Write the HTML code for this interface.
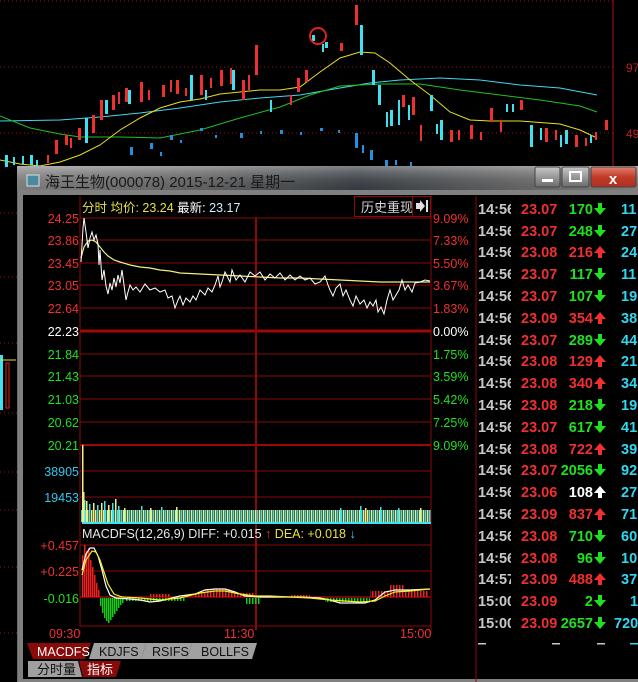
<!DOCTYPE html>
<html><head><meta charset="utf-8">
<style>
html,body{margin:0;padding:0;background:#000;width:638px;height:682px;overflow:hidden}
svg{display:block}
text{font-family:"Liberation Sans","Noto Sans CJK SC",sans-serif}
</style></head><body>
<svg width="638" height="682" viewBox="0 0 638 682" xmlns="http://www.w3.org/2000/svg">
<defs>
<linearGradient id="tb" x1="0" y1="0" x2="1" y2="0">
<stop offset="0" stop-color="#8a8a8a"/><stop offset="0.3" stop-color="#6a6a6a"/><stop offset="0.55" stop-color="#3a4148"/><stop offset="0.8" stop-color="#6c6c6c"/><stop offset="1" stop-color="#8c8c8c"/></linearGradient>
<linearGradient id="tbv" x1="0" y1="0" x2="0" y2="1"><stop offset="0" stop-color="#fff" stop-opacity="0.35"/><stop offset="1" stop-color="#000" stop-opacity="0.1"/></linearGradient>
<linearGradient id="cls" x1="0" y1="0" x2="0" y2="1"><stop offset="0" stop-color="#e08070"/><stop offset="0.5" stop-color="#c23a28"/><stop offset="1" stop-color="#b03020"/></linearGradient>
<linearGradient id="btn" x1="0" y1="0" x2="0" y2="1"><stop offset="0" stop-color="#c8c8c8"/><stop offset="1" stop-color="#6a6a6a"/></linearGradient>
<pattern id="vol" x="81" y="0" width="4" height="682" patternUnits="userSpaceOnUse"><rect x="0" y="0" width="1.5" height="682" fill="#40e0f0"/><rect x="2" y="0" width="1.5" height="682" fill="#f0f080"/></pattern>
<pattern id="mr" x="0" y="0" width="3" height="682" patternUnits="userSpaceOnUse"><rect x="0" y="0" width="1.5" height="682" fill="#f02020"/></pattern>
<pattern id="mg" x="0" y="0" width="3" height="682" patternUnits="userSpaceOnUse"><rect x="0" y="0" width="1.5" height="682" fill="#10d010"/></pattern>
<clipPath id="tc"><rect x="476" y="196" width="35" height="486"/></clipPath>
</defs>

<!-- background chart -->
<g stroke="#a01010" stroke-dasharray="1,3" stroke-width="1">
<line x1="0" y1="67" x2="614" y2="67"/><line x1="0" y1="133" x2="614" y2="133"/>
<line x1="0" y1="1" x2="614" y2="1"/>
<line x1="0" y1="213" x2="17" y2="213"/><line x1="0" y1="277" x2="17" y2="277"/><line x1="0" y1="343" x2="17" y2="343"/><line x1="0" y1="413" x2="17" y2="413"/><line x1="0" y1="472" x2="17" y2="472"/><line x1="0" y1="510" x2="17" y2="510"/><line x1="0" y1="567" x2="17" y2="567"/><line x1="0" y1="633" x2="17" y2="633"/>
</g>
<line x1="613" y1="0" x2="613" y2="166" stroke="#b01010"/>
<text x="626" y="72" fill="#c02020" font-size="12">97</text>
<text x="626" y="138" fill="#c02020" font-size="12">49</text>
<polyline fill="none" stroke="#40d8f0" stroke-width="1" points="0,121 60,120 100,117 140,113 180,108 220,102 260,98 300,95 340,88 370,83 400,80 440,78 480,80 520,85 560,88 597,95"/>
<polyline fill="none" stroke="#20c020" stroke-width="1" points="0,116 30,128 60,134 80,137 120,137 160,138 200,130 240,118 280,107 310,95 340,86 380,84 420,84 460,90 500,95 540,100 580,106 597,112"/>
<polyline fill="none" stroke="#e8e020" stroke-width="1" points="0,160 20,164 40,166 60,162 80,155 100,145 120,130 140,118 160,108 180,102 200,99 220,94 240,92 260,90 280,90 300,87 320,72 340,58 360,52 375,53 390,63 410,80 430,95 450,112 470,120 490,121 520,121 560,124 580,130 597,138"/>
<g fill="#f03030">
<rect x="55" y="140" width="3" height="14"/><rect x="65" y="135" width="3" height="10"/><rect x="78" y="128" width="3" height="12"/><rect x="92" y="115" width="3" height="18"/><rect x="100" y="100" width="3" height="20"/><rect x="112" y="95" width="3" height="15"/><rect x="125" y="88" width="3" height="14"/><rect x="140" y="82" width="3" height="20"/><rect x="162" y="85" width="3" height="12"/><rect x="176" y="80" width="3" height="14"/><rect x="200" y="75" width="3" height="20"/><rect x="220" y="70" width="3" height="16"/><rect x="242" y="80" width="3" height="20"/><rect x="255" y="45" width="3" height="30"/><rect x="297" y="78" width="3" height="14"/><rect x="305" y="70" width="3" height="12"/><rect x="340" y="43" width="3" height="8"/><rect x="355" y="5" width="3" height="20"/><rect x="402" y="95" width="3" height="12"/><rect x="412" y="97" width="3" height="18"/><rect x="450" y="130" width="3" height="12"/><rect x="470" y="125" width="3" height="14"/><rect x="490" y="108" width="3" height="14"/><rect x="520" y="100" width="3" height="10"/><rect x="545" y="128" width="3" height="14"/><rect x="575" y="135" width="3" height="12"/><rect x="605" y="120" width="3" height="10"/>
<rect x="47" y="155" width="2" height="8"/><rect x="70" y="138" width="2" height="10"/><rect x="118" y="92" width="2" height="12"/><rect x="148" y="90" width="2" height="10"/><rect x="170" y="80" width="2" height="12"/><rect x="185" y="88" width="2" height="8"/><rect x="210" y="78" width="2" height="10"/><rect x="230" y="68" width="2" height="16"/><rect x="248" y="75" width="2" height="15"/><rect x="290" y="95" width="2" height="10"/><rect x="420" y="125" width="2" height="16"/><rect x="458" y="130" width="2" height="10"/><rect x="480" y="132" width="2" height="8"/><rect x="500" y="120" width="2" height="12"/><rect x="555" y="130" width="2" height="10"/><rect x="585" y="138" width="2" height="8"/><rect x="595" y="132" width="2" height="8"/>
</g>
<g fill="#40e0f0">
<rect x="5" y="155" width="3" height="12"/><rect x="30" y="155" width="3" height="10"/><rect x="85" y="118" width="3" height="25"/><rect x="105" y="100" width="3" height="14"/><rect x="128" y="90" width="3" height="14"/><rect x="190" y="75" width="3" height="25"/><rect x="232" y="70" width="3" height="20"/><rect x="312" y="35" width="3" height="6"/><rect x="325" y="42" width="3" height="6"/><rect x="360" y="25" width="3" height="30"/><rect x="372" y="70" width="3" height="15"/><rect x="378" y="85" width="3" height="20"/><rect x="390" y="110" width="3" height="16"/><rect x="430" y="95" width="3" height="16"/><rect x="440" y="120" width="3" height="20"/><rect x="530" y="125" width="3" height="22"/><rect x="565" y="130" width="3" height="14"/>
<rect x="13" y="157" width="2" height="8"/><rect x="22" y="156" width="2" height="8"/><rect x="36" y="160" width="2" height="6"/><rect x="205" y="90" width="2" height="10"/><rect x="270" y="100" width="2" height="12"/><rect x="322" y="44" width="2" height="8"/><rect x="386" y="112" width="2" height="15"/><rect x="398" y="100" width="2" height="25"/><rect x="408" y="105" width="2" height="15"/><rect x="436" y="124" width="2" height="10"/><rect x="506" y="104" width="2" height="8"/><rect x="512" y="104" width="2" height="8"/><rect x="540" y="128" width="2" height="12"/><rect x="560" y="135" width="2" height="12"/><rect x="590" y="135" width="2" height="8"/>
</g>
<g fill="#2090e0">
<rect x="130" y="147" width="3" height="8"/><rect x="150" y="143" width="3" height="6"/><rect x="170" y="135" width="3" height="5"/><rect x="200" y="128" width="3" height="3"/><rect x="240" y="133" width="3" height="5"/><rect x="280" y="130" width="3" height="4"/><rect x="320" y="128" width="3" height="3"/><rect x="355" y="133" width="3" height="15"/><rect x="370" y="150" width="3" height="10"/><rect x="385" y="160" width="3" height="6"/>
<rect x="160" y="152" width="2" height="4"/><rect x="180" y="140" width="2" height="3"/><rect x="215" y="135" width="2" height="3"/><rect x="260" y="131" width="2" height="3"/><rect x="300" y="132" width="2" height="3"/><rect x="338" y="130" width="2" height="3"/><rect x="362" y="145" width="2" height="8"/><rect x="395" y="160" width="2" height="5"/><rect x="410" y="162" width="2" height="4"/>
</g>
<circle cx="318" cy="36" r="8" fill="none" stroke="#e02020" stroke-width="2"/>
<!-- left bits -->
<rect x="0" y="355" width="3" height="55" fill="#40e0f0"/><rect x="6" y="363" width="3" height="45" fill="none" stroke="#e02020"/>
<line x1="0" y1="360" x2="16" y2="360" stroke="#e8e020"/>

<!-- dialog frame -->
<rect x="17" y="166" width="621" height="516" fill="#6c6c6c"/>
<rect x="17" y="166" width="621" height="24" fill="url(#tb)"/>
<rect x="17" y="166" width="621" height="24" fill="url(#tbv)"/>
<rect x="18" y="190" width="620" height="492" fill="#808080"/>
<rect x="23" y="195" width="615" height="484" fill="#000"/>
<rect x="27" y="175" width="12" height="11" fill="#4a8aa0" stroke="#ddd" stroke-width="1"/>
<text x="45" y="187" fill="#1a1a1a" font-size="15">海王生物(000078) 2015-12-21 星期一</text>
<rect x="535" y="167" width="25" height="20" rx="2" fill="url(#btn)" stroke="#444"/>
<rect x="542" y="179" width="11" height="3" fill="#fff"/>
<rect x="562" y="167" width="27" height="20" rx="2" fill="url(#btn)" stroke="#444"/>
<rect x="570" y="172" width="11" height="9" fill="none" stroke="#fff" stroke-width="2"/>
<rect x="591" y="167" width="45" height="20" rx="2" fill="url(#cls)" stroke="#444"/>
<text x="613" y="184" fill="#fff" font-size="15" font-weight="bold" text-anchor="middle">x</text>

<!-- main chart grid -->
<g stroke="#8a0a0a" stroke-width="1">
<line x1="80" y1="218" x2="431" y2="218"/><line x1="80" y1="240" x2="431" y2="240"/><line x1="80" y1="263" x2="431" y2="263"/><line x1="80" y1="285" x2="431" y2="285"/><line x1="80" y1="308" x2="431" y2="308"/>
<line x1="80" y1="354" x2="431" y2="354"/><line x1="80" y1="376" x2="431" y2="376"/><line x1="80" y1="399" x2="431" y2="399"/><line x1="80" y1="422" x2="431" y2="422"/>
<line x1="80" y1="471" x2="431" y2="471"/><line x1="80" y1="497" x2="431" y2="497"/>
<line x1="80" y1="545" x2="431" y2="545"/><line x1="80" y1="571" x2="431" y2="571"/>
<line x1="80" y1="522" x2="431" y2="522"/><line x1="80" y1="626" x2="431" y2="626"/>
</g>
<line x1="80" y1="331" x2="431" y2="331" stroke="#a00808" stroke-width="3"/>
<line x1="80" y1="445" x2="431" y2="445" stroke="#a00808" stroke-width="2"/>
<line x1="80" y1="597" x2="431" y2="597" stroke="#a00808" stroke-width="1.5"/>
<line x1="80" y1="196" x2="80" y2="626" stroke="#8a0a0a"/>
<line x1="431" y1="196" x2="431" y2="626" stroke="#8a0a0a"/>
<line x1="256" y1="218" x2="256" y2="630" stroke="#8a0a0a" stroke-width="2"/>
<line x1="476" y1="196" x2="476" y2="682" stroke="#8a0a0a"/>
<line x1="80" y1="630" x2="80" y2="634" stroke="#8a0a0a"/><line x1="431" y1="626" x2="431" y2="634" stroke="#8a0a0a"/>

<!-- header -->
<text x="82" y="212" font-size="12.5"><tspan fill="#e8e040">分时 均价: 23.24</tspan><tspan fill="#fff"> 最新: </tspan><tspan fill="#d0f0ff">23.17</tspan></text>
<rect x="354.5" y="196.5" width="58" height="20" fill="#000" stroke="#8a0a0a"/>
<text x="361" y="212" fill="#d8d8d8" font-size="13">历史重现</text>
<rect x="412.5" y="196.5" width="18" height="20" fill="#000" stroke="#8a0a0a"/>
<path d="M416 203h4v-3l5 6l-5 6v-3h-4z" fill="#e0e0e0"/><rect x="426" y="200" width="2" height="12" fill="#e0e0e0"/>

<!-- left labels -->
<g font-size="12.5" text-anchor="end">
<text x="79" y="223" fill="#f03030">24.25</text><text x="79" y="245" fill="#f03030">23.86</text><text x="79" y="268" fill="#f03030">23.45</text><text x="79" y="290" fill="#f03030">23.05</text><text x="79" y="313" fill="#f03030">22.64</text>
<text x="79" y="336" fill="#fff">22.23</text>
<text x="79" y="359" fill="#20e020">21.84</text><text x="79" y="381" fill="#20e020">21.43</text><text x="79" y="404" fill="#20e020">21.03</text><text x="79" y="427" fill="#20e020">20.62</text><text x="79" y="450" fill="#20e020">20.21</text>
<text x="79" y="476" fill="#30c8f0">38905</text><text x="79" y="502" fill="#30c8f0">19453</text>
<text x="79" y="550" fill="#f03030">+0.457</text><text x="79" y="576" fill="#f03030">+0.225</text><text x="79" y="603" fill="#20e020">-0.016</text>
</g>
<g font-size="12.5">
<text x="433" y="223" fill="#f03030">9.09%</text><text x="433" y="245" fill="#f03030">7.33%</text><text x="433" y="268" fill="#f03030">5.50%</text><text x="433" y="290" fill="#f03030">3.67%</text><text x="433" y="313" fill="#f03030">1.83%</text>
<text x="433" y="336" fill="#fff">0.00%</text>
<text x="433" y="359" fill="#20e020">1.75%</text><text x="433" y="381" fill="#20e020">3.59%</text><text x="433" y="404" fill="#20e020">5.42%</text><text x="433" y="427" fill="#20e020">7.25%</text><text x="433" y="450" fill="#20e020">9.09%</text>
</g>

<!-- price lines -->
<polyline fill="none" stroke="#f0f080" stroke-width="1.2" points="81,258 84,247 88,241 92,240 96,242 100,247 104,252 108,256 114,260 120,262 130,265 140,267 150,268 160,270 170,271 180,273 200,274 220,275 240,276 260,277 280,278 300,278 320,279 340,280 360,281 380,282 400,282 420,282 430,282"/>
<polyline fill="none" stroke="#fff" stroke-width="1" points="81,262 83,228 84,218 86,232 88,248 90,238 92,232 94,240 96,235 98,244 99,265 100,250 102,280 104,270 106,286 108,294 110,283 112,290 114,278 116,287 118,275 120,283 122,270 124,285 126,300 128,292 130,285 133,290 136,287 140,292 145,284 150,290 155,288 160,292 165,290 168,298 172,296 175,308 178,300 180,296 183,305 186,298 190,302 193,296 196,300 200,290 205,295 208,288 212,292 215,285 218,276 220,287 222,282 225,272 228,278 230,282 232,270 236,280 240,275 245,282 250,272 255,276 260,272 265,280 270,274 275,278 280,273 285,280 290,275 295,280 300,276 305,280 310,278 315,284 320,282 325,276 328,285 330,290 333,296 336,288 340,284 343,296 346,290 350,300 353,306 356,296 360,304 364,300 367,308 370,302 373,306 376,300 378,312 381,307 384,314 387,300 390,290 393,300 396,295 399,290 402,280 405,290 408,285 412,292 415,283 420,282 425,280 430,281"/>

<!-- volume -->
<rect x="81" y="510" width="350" height="12" fill="url(#vol)"/>
<g fill="#40e0f0"><rect x="84" y="500" width="1.5" height="22"/><rect x="89" y="504" width="1.5" height="18"/><rect x="97" y="505" width="1.5" height="17"/><rect x="104" y="501" width="1.5" height="21"/><rect x="112" y="503" width="1.5" height="19"/><rect x="118" y="506" width="1.5" height="16"/><rect x="141" y="506" width="1.5" height="16"/><rect x="161" y="507" width="1.5" height="15"/><rect x="340" y="508" width="1.5" height="14"/><rect x="360" y="506" width="1.5" height="16"/><rect x="380" y="507" width="1.5" height="15"/><rect x="398" y="508" width="1.5" height="14"/></g>
<g fill="#f0f080"><rect x="82" y="445" width="1.5" height="77"/><rect x="83" y="492" width="1.5" height="30"/><rect x="86" y="501" width="1.5" height="21"/><rect x="93" y="503" width="1.5" height="19"/><rect x="101" y="503" width="1.5" height="19"/><rect x="108" y="505" width="1.5" height="17"/><rect x="115" y="499" width="1.5" height="23"/><rect x="124" y="508" width="1.5" height="14"/><rect x="150" y="508" width="1.5" height="14"/><rect x="176" y="507" width="1.5" height="15"/><rect x="365" y="508" width="1.5" height="14"/><rect x="420" y="508" width="1.5" height="14"/></g>
<rect x="82" y="522" width="349" height="2" fill="#40e0f0"/>

<!-- MACD -->
<text x="82" y="538" font-size="12.5"><tspan fill="#e8e8e8">MACDFS(12,26,9) DIFF: +0.015 </tspan><tspan fill="#f03030">↑</tspan><tspan fill="#e8e040"> DEA: +0.018 </tspan><tspan fill="#40d0f0">↓</tspan></text>
<g fill="#f02020">
<rect x="82" y="555" width="1.5" height="42"/><rect x="84" y="545" width="1.5" height="52"/><rect x="86" y="551" width="1.5" height="46"/><rect x="88" y="548" width="1.5" height="49"/><rect x="90" y="560" width="1.5" height="37"/><rect x="92" y="567" width="1.5" height="30"/><rect x="94" y="575" width="1.5" height="22"/><rect x="96" y="583" width="1.5" height="14"/><rect x="98" y="590" width="1.5" height="7"/>
</g>
<rect x="195" y="593" width="60" height="4" fill="url(#mr)"/><rect x="205" y="589" width="25" height="8" fill="url(#mr)"/><rect x="370" y="591" width="58" height="6" fill="url(#mr)"/><rect x="390" y="585" width="15" height="12" fill="url(#mr)"/><rect x="150" y="594" width="20" height="3" fill="url(#mr)"/><rect x="290" y="595" width="20" height="2" fill="url(#mr)"/>
<g fill="#10d010">
<rect x="100" y="598" width="1.5" height="8"/><rect x="102" y="598" width="1.5" height="15"/><rect x="104" y="598" width="1.5" height="20"/><rect x="106" y="598" width="1.5" height="23"/><rect x="108" y="598" width="1.5" height="25"/><rect x="110" y="598" width="1.5" height="22"/><rect x="112" y="598" width="1.5" height="19"/><rect x="114" y="598" width="1.5" height="16"/><rect x="116" y="598" width="1.5" height="13"/><rect x="118" y="598" width="1.5" height="10"/><rect x="120" y="598" width="1.5" height="7"/><rect x="122" y="598" width="1.5" height="5"/>
</g>
<rect x="245" y="598" width="15" height="6" fill="url(#mg)"/><rect x="125" y="598" width="60" height="3" fill="url(#mg)"/><rect x="325" y="598" width="45" height="4" fill="url(#mg)"/>

<polyline fill="none" stroke="#fff" stroke-width="1.2" points="82,570 86,554 90,548 94,548 98,556 102,570 106,586 110,595 116,598 130,599 140,600 150,602 160,601 180,596 195,594 205,590 215,589 225,589 235,592 245,596 260,597 280,597 300,597 320,598 330,600 340,603 350,603 365,603 375,600 385,592 395,590 410,590 430,589"/>
<polyline fill="none" stroke="#f0f020" stroke-width="1.2" points="82,575 86,560 92,551 96,552 100,560 104,572 108,584 114,594 122,597 140,598 160,600 180,598 200,593 215,591 225,591 240,594 255,596 270,596 290,597 310,598 330,600 345,601 360,602 375,601 385,596 395,592 410,591 430,589"/>

<g font-size="12.5" fill="#f03030">
<text x="49" y="638">09:30</text><text x="224" y="638">11:30</text><text x="400" y="638">15:00</text>
</g>

<!-- tabs -->
<path d="M27 643h64l-6 16h-52z" fill="#8a0a0a"/>
<text x="37" y="656" fill="#fff" font-size="12.5">MACDFS</text>
<path d="M94 643h52l-5 16h-52z" fill="#a0a0a0"/>
<text x="99" y="656" fill="#111" font-size="12.5">KDJFS</text>
<path d="M146 643h46l-5 16h-46z" fill="#a0a0a0"/>
<text x="152" y="656" fill="#111" font-size="12.5">RSIFS</text>
<path d="M192 643h65l-5 16h-65z" fill="#a0a0a0"/>
<text x="201" y="656" fill="#111" font-size="12.5">BOLLFS</text>
<path d="M28 661h50l4 16h-54z" fill="#a0a0a0"/>
<text x="37" y="674" fill="#111" font-size="13">分时量</text>
<path d="M79 661h42l-5 16h-33z" fill="#8a0a0a"/>
<text x="87" y="674" fill="#fff" font-size="13">指标</text>

<!-- right ticks -->
<g font-size="14.5" font-weight="bold">
<g clip-path="url(#tc)" fill="#c8c8c8">
<text x="478" y="214">14:56</text><text x="478" y="236">14:56</text><text x="478" y="257">14:56</text><text x="478" y="279">14:56</text><text x="478" y="301">14:56</text><text x="478" y="323">14:56</text><text x="478" y="345">14:56</text><text x="478" y="366">14:56</text><text x="478" y="388">14:56</text><text x="478" y="410">14:56</text><text x="478" y="432">14:56</text><text x="478" y="454">14:56</text><text x="478" y="475">14:56</text><text x="478" y="497">14:56</text><text x="478" y="519">14:56</text><text x="478" y="541">14:56</text><text x="478" y="563">14:56</text><text x="478" y="584">14:57</text><text x="478" y="606">15:00</text><text x="478" y="628">15:00</text>
</g>
<g fill="#f03030">
<text x="521" y="214">23.07</text><text x="521" y="236">23.07</text><text x="521" y="257">23.08</text><text x="521" y="279">23.07</text><text x="521" y="301">23.07</text><text x="521" y="323">23.09</text><text x="521" y="345">23.07</text><text x="521" y="366">23.08</text><text x="521" y="388">23.08</text><text x="521" y="410">23.08</text><text x="521" y="432">23.07</text><text x="521" y="454">23.08</text><text x="521" y="475">23.07</text><text x="521" y="497">23.06</text><text x="521" y="519">23.09</text><text x="521" y="541">23.08</text><text x="521" y="563">23.08</text><text x="521" y="584">23.09</text><text x="521" y="606">23.09</text><text x="521" y="628">23.09</text>
</g>
<g text-anchor="end">
<text x="593" y="214" fill="#20e020">170</text><text x="593" y="236" fill="#20e020">248</text><text x="593" y="257" fill="#f03030">216</text><text x="593" y="279" fill="#20e020">117</text><text x="593" y="301" fill="#20e020">107</text><text x="593" y="323" fill="#f03030">354</text><text x="593" y="345" fill="#20e020">289</text><text x="593" y="366" fill="#f03030">129</text><text x="593" y="388" fill="#f03030">340</text><text x="593" y="410" fill="#20e020">218</text><text x="593" y="432" fill="#20e020">617</text><text x="593" y="454" fill="#f03030">722</text><text x="593" y="475" fill="#20e020">2056</text><text x="593" y="497" fill="#fff">108</text><text x="593" y="519" fill="#f03030">837</text><text x="593" y="541" fill="#20e020">710</text><text x="593" y="563" fill="#20e020">96</text><text x="593" y="584" fill="#f03030">488</text><text x="593" y="606" fill="#20e020">2</text><text x="593" y="628" fill="#20e020">2657</text>
</g>
<g fill="#30d8f0">
<text x="621" y="214">11</text><text x="621" y="236">27</text><text x="621" y="257">24</text><text x="621" y="279">11</text><text x="621" y="301">19</text><text x="621" y="323">38</text><text x="621" y="345">44</text><text x="621" y="366">21</text><text x="621" y="388">34</text><text x="621" y="410">19</text><text x="621" y="432">41</text><text x="621" y="454">39</text><text x="621" y="475">92</text><text x="621" y="497">27</text><text x="621" y="519">71</text><text x="621" y="541">60</text><text x="621" y="563">10</text><text x="621" y="584">37</text><text x="630" y="606">1</text><text x="614" y="628">720</text>
</g>
</g>
<g fill="#20e020">
<path d="M598 203h4v5h4l-6 7l-6-7h4z"/><path d="M598 225h4v5h4l-6 7l-6-7h4z"/><path d="M598 268h4v5h4l-6 7l-6-7h4z"/><path d="M598 290h4v5h4l-6 7l-6-7h4z"/><path d="M598 334h4v5h4l-6 7l-6-7h4z"/><path d="M598 399h4v5h4l-6 7l-6-7h4z"/><path d="M598 421h4v5h4l-6 7l-6-7h4z"/><path d="M598 464h4v5h4l-6 7l-6-7h4z"/><path d="M598 530h4v5h4l-6 7l-6-7h4z"/><path d="M598 552h4v5h4l-6 7l-6-7h4z"/><path d="M598 595h4v5h4l-6 7l-6-7h4z"/><path d="M598 617h4v5h4l-6 7l-6-7h4z"/>
</g>
<g fill="#f03030">
<path d="M598 258h4v-5h4l-6-7l-6 7h4z"/><path d="M598 324h4v-5h4l-6-7l-6 7h4z"/><path d="M598 367h4v-5h4l-6-7l-6 7h4z"/><path d="M598 389h4v-5h4l-6-7l-6 7h4z"/><path d="M598 455h4v-5h4l-6-7l-6 7h4z"/><path d="M598 520h4v-5h4l-6-7l-6 7h4z"/><path d="M598 585h4v-5h4l-6-7l-6 7h4z"/>
</g>
<path d="M598 498h4v-5h4l-6-7l-6 7h4z" fill="#fff"/>
<g fill="#c8c8c8"><rect x="478" y="643" width="8" height="1.5"/><rect x="552" y="643" width="8" height="1.5"/><rect x="597" y="643" width="8" height="1.5"/></g>
<rect x="630" y="643" width="8" height="1.5" fill="#30d8f0"/>
</svg>
</body></html>
